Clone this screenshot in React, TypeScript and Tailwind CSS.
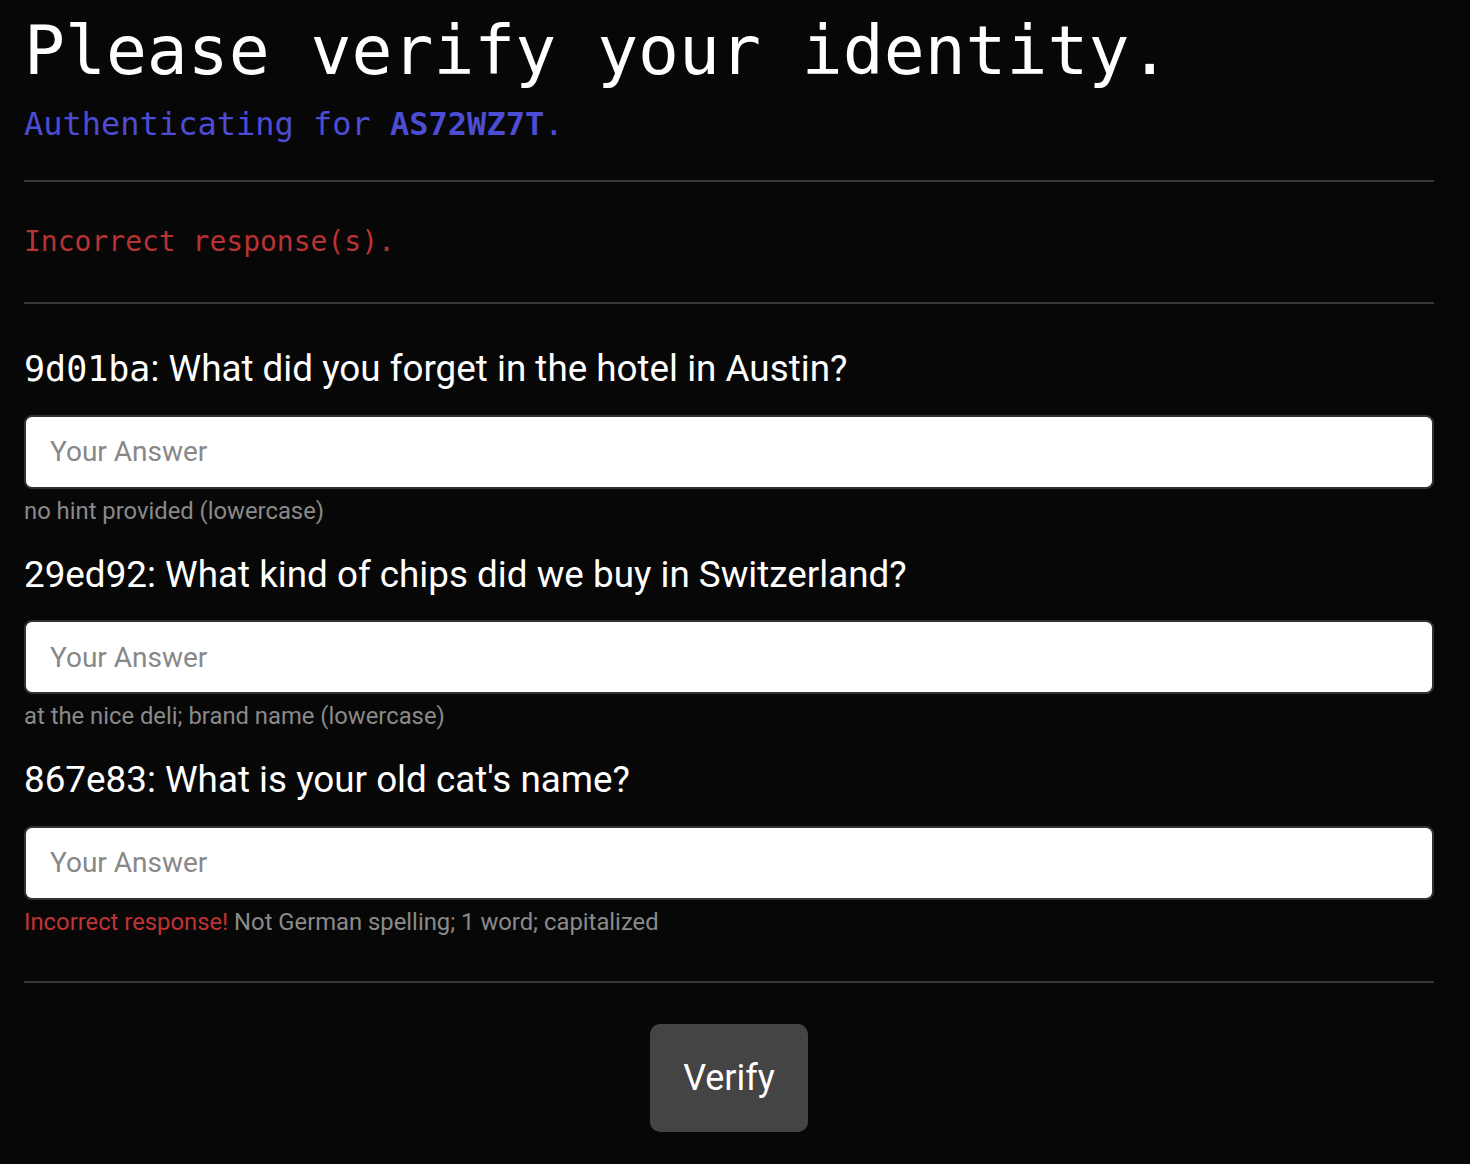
const questions = [
  {
    id: '9d01ba',
    monoId: true,
    text: 'What did you forget in the hotel in Austin?',
    hint: 'no hint provided (lowercase)',
    wrong: false,
  },
  {
    id: '29ed92',
    monoId: false,
    text: 'What kind of chips did we buy in Switzerland?',
    hint: 'at the nice deli; brand name (lowercase)',
    wrong: false,
  },
  {
    id: '867e83',
    monoId: false,
    text: "What is your old cat's name?",
    hint: 'Not German spelling; 1 word; capitalized',
    wrong: true,
  },
]

export default function App() {
  return (
    <div className="min-h-[1164px] bg-[#070707] font-['Roboto',sans-serif]">
      <div className="ml-[24px] w-[1410px] pt-[17px] pb-[32px]">
        <h1 className="font-['DejaVu_Sans_Mono',monospace] text-[68px] leading-none text-white">
          Please verify your identity.
        </h1>
        <p className="mt-[23px] font-['DejaVu_Sans_Mono',monospace] text-[32px] leading-none text-[#4c4cd4]">
          Authenticating for <span className="font-bold">AS72WZ7T</span>.
        </p>

        <div className="mt-[40px] h-[2px] bg-[#383838]" />

        <p className="mt-[46px] font-['DejaVu_Sans_Mono',monospace] text-[28px] leading-none text-[#b83333]">
          Incorrect response(s).
        </p>

        <div className="mt-[46px] h-[2px] bg-[#383838]" />

        <form className="mt-[47px]" onSubmit={(e) => e.preventDefault()}>
          {questions.map((q, i) => (
            <div key={q.id} className={i === 0 ? '' : 'mt-[33px]'}>
              <label className="block text-[36.8px] leading-none text-white">
                {q.monoId ? (
                  <span className="font-['DejaVu_Sans_Mono',monospace] text-[35px]">{q.id}</span>
                ) : (
                  q.id
                )}
                : {q.text}
              </label>
              <input
                type="text"
                placeholder="Your Answer"
                className="mt-[27px] block h-[74px] w-full rounded-[8px] border-2 border-[#333] bg-white px-[24px] text-[28px] text-black placeholder:text-[#888] outline-none"
              />
              <p className="mt-[11px] text-[23.8px] leading-none text-[#8a8a8a]">
                {q.wrong && <span className="text-[#c03333]">Incorrect response! </span>}
                {q.hint}
              </p>
            </div>
          ))}

          <div className="mt-[46px] h-[2px] bg-[#383838]" />

          <div className="mt-[41px] flex justify-center">
            <button
              type="submit"
              className="h-[108px] w-[158px] rounded-[10px] bg-[#444] text-[36px] text-white"
            >
              Verify
            </button>
          </div>
        </form>
      </div>
    </div>
  )
}
